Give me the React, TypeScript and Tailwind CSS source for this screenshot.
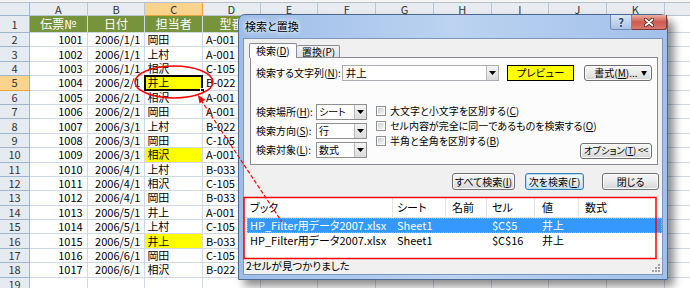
import React from "react";
import clsx from "clsx";

type Row = [string, string, string, string];

const DATA: Row[] = [
  ["1001", "2006/1/1", "岡田", "A-001"],
  ["1002", "2006/1/1", "上村", "A-001"],
  ["1003", "2006/1/1", "相沢", "C-105"],
  ["1004", "2006/2/1", "井上", "B-022"],
  ["1005", "2006/2/1", "相沢", "A-001"],
  ["1006", "2006/2/1", "岡田", "A-001"],
  ["1007", "2006/3/1", "上村", "B-022"],
  ["1008", "2006/3/1", "岡田", "C-105"],
  ["1009", "2006/3/1", "相沢", "A-001"],
  ["1010", "2006/4/1", "上村", "B-033"],
  ["1011", "2006/4/1", "相沢", "C-105"],
  ["1012", "2006/4/1", "岡田", "B-033"],
  ["1013", "2006/5/1", "井上", "A-001"],
  ["1014", "2006/5/1", "上村", "C-105"],
  ["1015", "2006/5/1", "井上", "B-033"],
  ["1016", "2006/6/1", "岡田", "C-105"],
  ["1017", "2006/6/1", "相沢", "B-022"],
];

// last column is only partly on screen, so no letter is drawn for it
const COLS = ["A", "B", "C", "D", "E", "F", "G", "H", "I", "J", "K", ""];
const TITLES = ["伝票№", "日付", "担当者", "型番"];

function RowHead({ n }: { n: number }) {
  return (
    <div
      className={clsx(
        "flex w-[30px] shrink-0 items-center justify-center border-r border-b text-[11px] leading-none text-[#333]",
        n === 5 ? "border-[#e6a33e] bg-[#f8d48d]" : "border-[#9eb6ce] bg-[#e6ebf2]"
      )}
    >
      {n}
    </div>
  );
}

function Sheet() {
  return (
    <div className="flex flex-col">
      <div className="h-[3px] border-b border-[#b7c1cc] bg-[#f4f4f4]" />
      {/* column headers */}
      <div className="flex h-[13px]">
        <div className="w-[30px] shrink-0 border-r border-b border-[#9eb6ce] bg-[#e6ebf2]" />
        {COLS.map((c, i) => (
          <div
            key={i}
            className={clsx(
              "flex w-[57.7px] shrink-0 items-center justify-center border-r border-b text-[11px] leading-none text-[#333]",
              c === "C" ? "border-[#e6a33e] bg-[#f8d48d]" : "border-[#b8c5d4] bg-[#e8ecf1]"
            )}
          >
            {c}
          </div>
        ))}
      </div>
      {/* title row */}
      <div className="flex h-[17px]">
        <RowHead n={1} />
        {COLS.map((c, i) => (
          <div
            key={i}
            className={clsx(
              "flex w-[57.7px] shrink-0 items-center justify-center border-r border-b text-[12px] leading-none text-white",
              i < 4 ? "border-[#d0d7e5] bg-[#77933c]" : "border-[#d0d7e5] bg-white"
            )}
          >
            {i < 4 ? TITLES[i] : ""}
          </div>
        ))}
      </div>
      {/* data */}
      {[...DATA, null].map((r, idx) => {
        const n = idx + 2;
        const yellow = n === 5 || n === 10 || n === 16;
        return (
          <div key={n} className="flex h-[14.4px]">
            <RowHead n={n} />
            <div className="flex w-[57.7px] shrink-0 items-center justify-end border-r border-b border-[#d0d7e5] pr-[4px] text-[11px] leading-none">
              {r ? r[0] : ""}
            </div>
            <div className="flex w-[57.7px] shrink-0 items-center justify-end border-r border-b border-[#d0d7e5] pr-[4px] text-[11px] leading-none">
              {r ? r[1] : ""}
            </div>
            <div
              className={clsx(
                "relative flex w-[57.7px] shrink-0 items-center border-r border-b border-[#d0d7e5] pl-[2px] text-[11px] leading-none",
                yellow ? "bg-[#ffff00]" : "bg-white"
              )}
            >
              {r ? r[2] : ""}
              {n === 5 && (
                <>
                  <div className="absolute -top-[1px] -left-[1px] h-[15.4px] w-[58.7px] border-2 border-black" />
                  <div className="absolute -right-[3px] -bottom-[3px] h-[5px] w-[5px] border border-white bg-black" />
                </>
              )}
            </div>
            <div className="flex w-[57.7px] shrink-0 items-center border-r border-b border-[#d0d7e5] pl-[3px] text-[11px] leading-none">
              {r ? r[3] : ""}
            </div>
            {COLS.slice(4).map((c, i) => (
              <div key={i} className="w-[57.7px] shrink-0 border-r border-b border-[#d0d7e5]" />
            ))}
          </div>
        );
      })}
    </div>
  );
}

function Btn({
  children,
  className = "",
  focus = false,
}: {
  children: React.ReactNode;
  className?: string;
  focus?: boolean;
}) {
  return (
    <div
      className={clsx(
        "flex shrink-0 items-center justify-center rounded-[3px] border leading-none text-black",
        focus
          ? "border-[#3c7fb1] bg-linear-to-b from-[#f4fafe] via-[#e3f1fb] to-[#c4e2f6] shadow-[inset_0_0_0_1px_#b6dcf6]"
          : "border-[#707070] bg-linear-to-b from-[#f6f6f6] via-[#ebebeb] to-[#d5d5d5] shadow-[inset_0_0_0_1px_#fcfcfc]",
        className
      )}
    >
      {children}
    </div>
  );
}

function DropBtn() {
  return (
    <div className="flex h-full w-[12px] shrink-0 items-center justify-center border-l border-[#b9b9b9] bg-linear-to-b from-[#f3f3f3] to-[#dcdcdc]">
      <svg width="7" height="4" viewBox="0 0 7 4">
        <polygon points="0,0 7,0 3.5,4" fill="#000" />
      </svg>
    </div>
  );
}

function Select({ value }: { value: string }) {
  return (
    <div className="flex h-[16px] w-[51px] items-center border border-[#8e8f8f] bg-white leading-none">
      <span className="flex-1 pl-[2px]">{value}</span>
      <DropBtn />
    </div>
  );
}

function Check({ children }: { children: React.ReactNode }) {
  return (
    <div className="flex h-[13px] items-center leading-none">
      <div className="flex h-[10px] w-[10px] shrink-0 items-center justify-center border border-[#8e8f8f] bg-white">
        <div className="h-[6px] w-[6px] bg-linear-to-br from-[#cbcfd5] to-[#f6f6f6]" />
      </div>
      <span className="ml-[4px]">{children}</span>
    </div>
  );
}

function Dialog() {
  return (
    <div className="absolute top-[14px] left-[238px] flex h-[266px] w-[430px] flex-col rounded-t-[7px] border border-[#4b6a94] bg-linear-to-r from-[#9ebde8] via-[#bcd3f1] to-[#a2c0e9] text-[10px] whitespace-nowrap shadow-[6px_6px_9px_rgba(0,0,0,0.45)] [font-feature-settings:'palt']">
      {/* title bar */}
      <div className="relative h-[23px] shrink-0">
        <span className="absolute top-[6px] left-[6px] text-[11px] leading-none text-black [text-shadow:0_0_4px_#fff,0_0_6px_#fff]">
          検索と置換
        </span>
        <div className="absolute top-0 right-0 flex">
          <div className="flex h-[15px] w-[22px] items-center justify-center rounded-bl-[3px] border border-t-0 border-[#6f8bb5] bg-linear-to-b from-[#d7e4f5] to-[#a9c3e7] text-[11px] leading-none font-bold text-[#233a5c] [text-shadow:0_0_2px_#fff]">
            ?
          </div>
          <div className="flex h-[15px] w-[35px] items-center justify-center rounded-br-[3px] border border-t-0 border-l-0 border-[#7d3a36] bg-linear-to-b from-[#eab0a4] via-[#cf5a4e] to-[#d8786c]">
            <svg width="10" height="9" viewBox="0 0 10 9">
              <path d="M1.5 1.5 L8.5 7.5 M8.5 1.5 L1.5 7.5" stroke="#4a1d1a" strokeWidth="3.4" strokeLinecap="round" />
              <path d="M1.5 1.5 L8.5 7.5 M8.5 1.5 L1.5 7.5" stroke="#fff" strokeWidth="1.8" strokeLinecap="round" />
            </svg>
          </div>
        </div>
      </div>

      {/* client */}
      <div className="mx-[4px] mb-[4px] flex flex-1 flex-col border border-[#7d97bc] bg-[#f0f0f0]">
        {/* tabs */}
        <div className="flex px-[5px] pt-[4px]">
          <div className="relative z-10 flex h-[15px] w-[48px] items-center rounded-t-[2px] border border-b-0 border-[#898c95] bg-[#fcfcfc] pl-[6px] leading-none">
            検索(<u>D</u>)
          </div>
          <div className="mt-[2px] flex h-[13px] w-[43px] items-center rounded-t-[2px] border border-b-0 border-l-0 border-[#898c95] bg-linear-to-b from-[#f2f2f2] to-[#e0e0e0] pl-[5px] leading-none">
            置換(<u>P</u>)
          </div>
        </div>

        {/* tab panel */}
        <div className="-mt-[1px] ml-[6px] flex h-[108px] w-[408px] flex-col border border-[#898c95] bg-[#fcfcfc] px-[5px] pt-[7px] pb-[5px]">
          <div className="flex h-[16px] items-center">
            <span className="w-[86px] leading-none">
              検索する文字列(<u>N</u>):
            </span>
            <div className="flex h-[16px] w-[158px] items-center border border-[#abadb3] bg-white text-[10.5px] leading-none">
              <span className="flex-1 pl-[3px]">井上</span>
              <DropBtn />
            </div>
            <div className="ml-[8px] flex h-[16px] w-[67px] items-center justify-center border border-black bg-[#ffff00] text-[10.5px] leading-none">
              プレビュー
            </div>
            <Btn className="ml-[10px] h-[16px] w-[68px]">
              <span className="ml-[6px] flex-1 text-center">
                書式(<u>M</u>)...
              </span>
              <span className="mr-[4px] text-[6px]">▼</span>
            </Btn>
          </div>

          <div className="mt-[23px] flex flex-1">
            <div className="flex shrink-0 flex-col gap-[3px]">
              <div className="flex items-center">
                <span className="w-[60px] leading-none">
                  検索場所(<u>H</u>):
                </span>
                <Select value="シート" />
              </div>
              <div className="flex items-center">
                <span className="w-[60px] leading-none">
                  検索方向(<u>S</u>):
                </span>
                <Select value="行" />
              </div>
              <div className="flex items-center">
                <span className="w-[60px] leading-none">
                  検索対象(<u>L</u>):
                </span>
                <Select value="数式" />
              </div>
            </div>
            <div className="ml-[9px] flex min-w-0 flex-1 flex-col gap-[2px]">
              <Check>
                大文字と小文字を区別する(<u>C</u>)
              </Check>
              <Check>
                セル内容が完全に同一であるものを検索する(<u>O</u>)
              </Check>
              <Check>
                半角と全角を区別する(<u>B</u>)
              </Check>
            </div>
            <Btn className="mt-auto h-[16px] w-[72px] text-[9.5px] tracking-[-0.2px]">
              オプション(<u>T</u>)&nbsp;&lt;&lt;
            </Btn>
          </div>
        </div>

        {/* buttons */}
        <div className="mt-[8px] flex h-[17px]">
          <Btn className="ml-[208px] w-[63px]">
            すべて検索(<u>I</u>)
          </Btn>
          <Btn focus className="ml-[10px] w-[59px]">
            次を検索(<u>F</u>)
          </Btn>
          <Btn className="ml-[18px] w-[57px]">閉じる</Btn>
        </div>

        {/* results */}
        <div className="mt-[7px] flex h-[61px] flex-col bg-white text-[11px] leading-none">
          <div className="flex h-[21px] items-center border-b border-[#e5e5e5]">
            <div className="flex h-full w-[149px] items-center border-r border-[#e5e5e5] pl-[6px]">ブック</div>
            <div className="flex h-full w-[53px] items-center border-r border-[#e5e5e5] pl-[4px]">シート</div>
            <div className="flex h-full w-[41px] items-center border-r border-[#e5e5e5] pl-[6px]">名前</div>
            <div className="flex h-full w-[48px] items-center border-r border-[#e5e5e5] pl-[5px]">セル</div>
            <div className="flex h-full w-[44px] items-center border-r border-[#e5e5e5] pl-[7px]">値</div>
            <div className="flex h-full flex-1 items-center pl-[6px]">数式</div>
          </div>
          {[
            ["$C$5", true],
            ["$C$16", false],
          ].map(([cell, sel]) => (
            <div key={cell as string} className="flex h-[15px] pl-[3px]">
              <div
                className={clsx(
                  "flex flex-1 items-center border border-dotted",
                  sel ? "border-[#f0a868] bg-[#3399ff] text-white" : "border-transparent text-black"
                )}
              >
                <span className="w-[145px] pl-[2px]">HP_Filter用データ2007.xlsx</span>
                <span className="w-[53px] pl-[4px]">Sheet1</span>
                <span className="w-[41px]" />
                <span className="w-[48px] pl-[5px]">{cell as string}</span>
                <span className="w-[44px] pl-[7px]">井上</span>
              </div>
            </div>
          ))}
        </div>

        {/* status */}
        <div className="relative flex flex-1 items-center border-t border-[#d5d5d5] pl-[2px] text-[10.5px] leading-none">
          2セルが見つかりました
          <svg className="absolute right-[1px] bottom-[1px]" width="10" height="10" viewBox="0 0 10 10">
            <g fill="#a0a0a0">
              <rect x="7" y="1" width="2" height="2" />
              <rect x="4" y="4" width="2" height="2" />
              <rect x="7" y="4" width="2" height="2" />
              <rect x="1" y="7" width="2" height="2" />
              <rect x="4" y="7" width="2" height="2" />
              <rect x="7" y="7" width="2" height="2" />
            </g>
          </svg>
        </div>
      </div>
    </div>
  );
}

export default function App() {
  return (
    <div className="relative h-[288px] w-[690px] overflow-hidden bg-white font-['Noto_Sans_CJK_JP','Noto_Sans',sans-serif] text-black">
      <Sheet />
      <Dialog />
      {/* annotations */}
      <svg className="pointer-events-none absolute inset-0" width="690" height="288" viewBox="0 0 690 288">
        <ellipse cx="174" cy="82" rx="39" ry="16" fill="none" stroke="#ff0000" strokeWidth="1.5" />
        <line x1="201" y1="100" x2="282" y2="222" stroke="#ff0000" strokeWidth="1.2" strokeDasharray="4 2" />
        <polygon points="198,95 205.3,99.8 199.5,103.6" fill="#ff0000" />
        <rect x="244" y="197.5" width="412" height="61" fill="none" stroke="#ff0000" strokeWidth="1.5" />
      </svg>
    </div>
  );
}
